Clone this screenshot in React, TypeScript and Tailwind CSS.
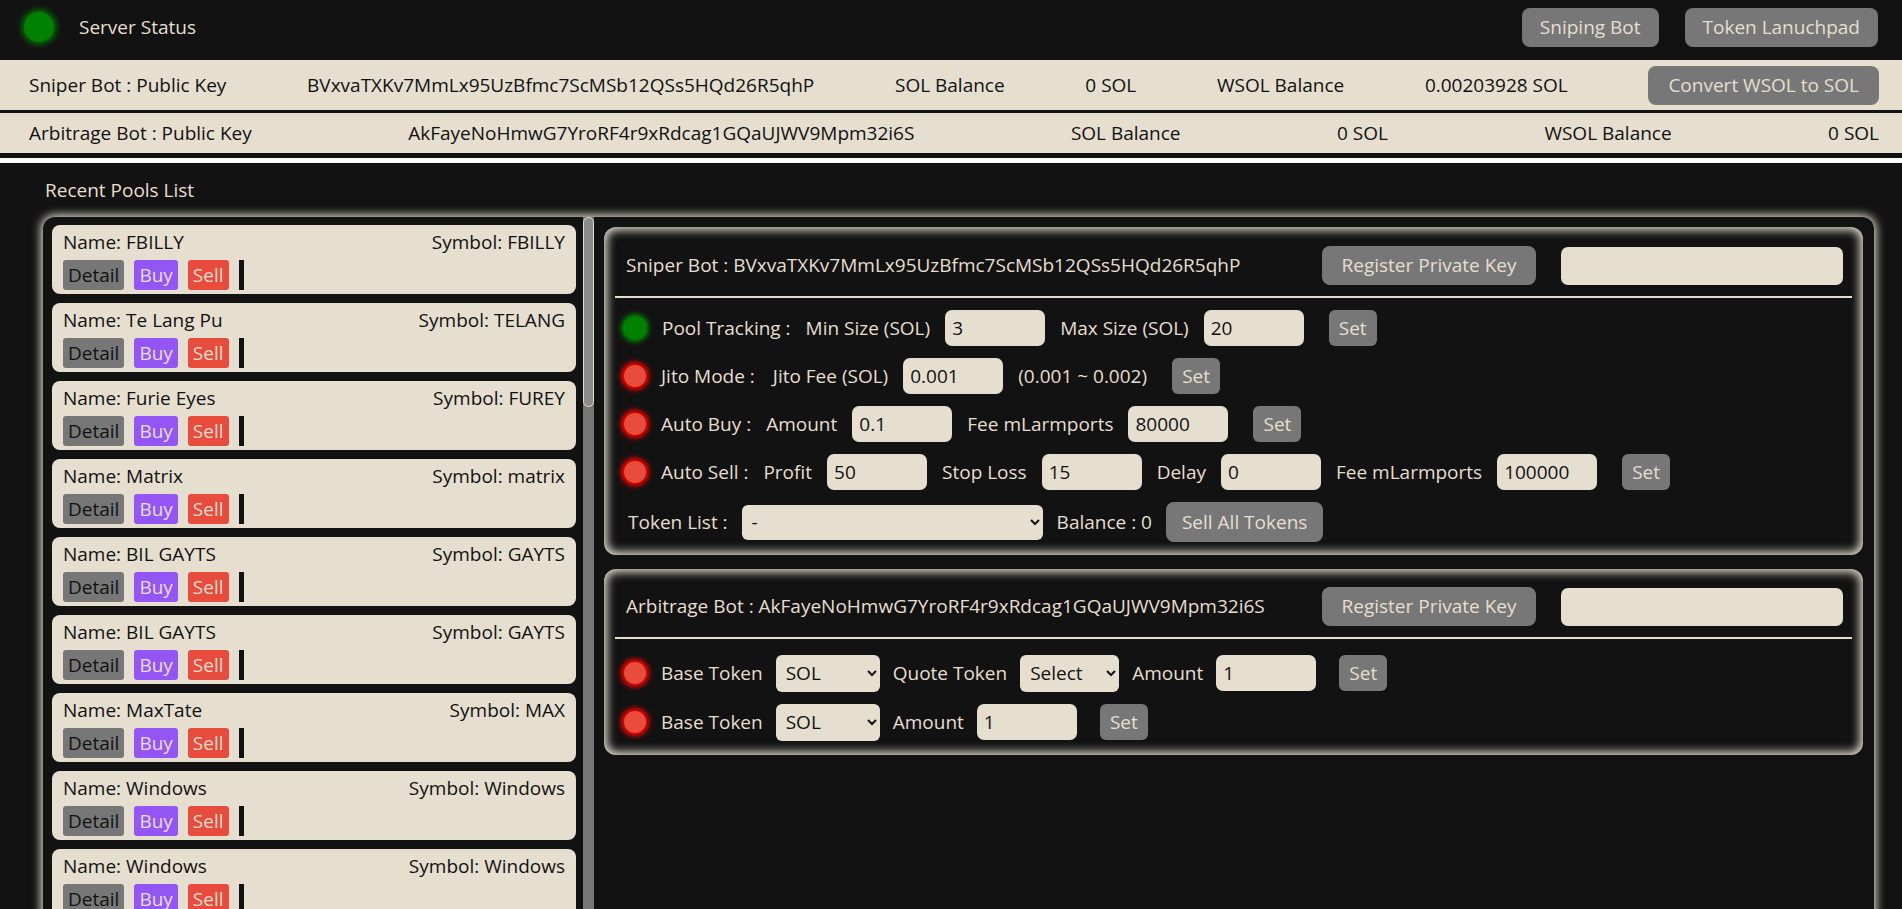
import React from "react";

type Pool = { name: string; symbol: string };

const seed: Pool[] = [
  { name: "FBILLY", symbol: "FBILLY" },
  { name: "Te Lang Pu", symbol: "TELANG" },
  { name: "Furie Eyes", symbol: "FUREY" },
  { name: "Matrix", symbol: "matrix" },
  { name: "BIL GAYTS", symbol: "GAYTS" },
  { name: "BIL GAYTS", symbol: "GAYTS" },
  { name: "MaxTate", symbol: "MAX" },
  { name: "Windows", symbol: "Windows" },
  { name: "Windows", symbol: "Windows" },
];

const pools: Pool[] = [...seed, ...seed.slice(0, 3)];

function Dot({ on }: { on?: boolean }) {
  return on ? (
    <div className="w-[24px] h-[24px] shrink-0 rounded-full bg-[#008000] shadow-[0_0_5px_2px_#008000]" />
  ) : (
    <div className="w-[22px] h-[22px] shrink-0 rounded-full bg-[#e74c3c] shadow-[0_0_5px_3px_#ff0000]" />
  );
}

function Field({ value, w = "w-[100px]" }: { value: string; w?: string }) {
  return (
    <input
      defaultValue={value}
      className={`${w} h-[36px] rounded-[7px] bg-[#e6dfd0] text-[#111] pl-[7px] outline-none`}
    />
  );
}

function SetButton() {
  return (
    <button className="ml-[10px] w-[48px] h-[36px] rounded-[6px] bg-[#777] text-[#e6dfd0]">
      Set
    </button>
  );
}

function PoolCard({ pool }: { pool: Pool }) {
  return (
    <div className="h-[69px] shrink-0 rounded-[8px] bg-[#e6dfd0] px-[11px] pt-[3px] text-[#111]">
      <div className="flex justify-between leading-[28px]">
        <span>Name: {pool.name}</span>
        <span>Symbol: {pool.symbol}</span>
      </div>
      <div className="flex items-center gap-[10px] mt-[4px] leading-[30px]">
        <button className="h-[30px] px-[5px] rounded-[3px] bg-[#777] text-[#111]">Detail</button>
        <button className="h-[30px] px-[5px] rounded-[3px] bg-[#9455f5] text-[#e6dfd0]">Buy</button>
        <button className="h-[30px] px-[5px] rounded-[3px] bg-[#e74c3c] text-[#e6dfd0]">Sell</button>
        <div className="w-[5px] h-[30px] bg-[#121212]" />
      </div>
    </div>
  );
}

function PanelHeader({ title }: { title: string }) {
  return (
    <div className="flex items-center justify-between pl-[11px] pr-[9px]">
      <span>{title}</span>
      <div className="flex items-center gap-[25px]">
        <button className="w-[214px] h-[39px] rounded-[8px] bg-[#777] text-[#e6dfd0]">
          Register Private Key
        </button>
        <input className="w-[282px] h-[38px] rounded-[7px] bg-[#e6dfd0] outline-none" />
      </div>
    </div>
  );
}

export default function App() {
  return (
    <div className="h-screen overflow-hidden bg-[#121212] text-[#e6dfd0] font-['Open_Sans','Noto_Sans',sans-serif] text-[19px] leading-[27px]">
      {/* top bar */}
      <div className="flex items-center justify-between h-[54px] pl-[24px] pr-[24px] mb-[6px]">
        <div className="flex items-center gap-[25px]">
          <div className="w-[30px] h-[30px] rounded-full bg-[#008000] shadow-[0_0_6px_2px_#008000]" />
          <span>Server Status</span>
        </div>
        <div className="flex gap-[26px]">
          <button className="h-[39px] px-[18px] rounded-[8px] bg-[#777] text-[#e6dfd0]">Sniping Bot</button>
          <button className="h-[39px] px-[18px] rounded-[8px] bg-[#777] text-[#e6dfd0]">Token Lanuchpad</button>
        </div>
      </div>

      {/* wallets */}
      <div className="flex items-center justify-between h-[50px] bg-[#e6dfd0] text-[#111] pl-[29px] pr-[23px]">
        <span>Sniper Bot : Public Key</span>
        <span>BVxvaTXKv7MmLx95UzBfmc7ScMSb12QSs5HQd26R5qhP</span>
        <span>SOL Balance</span>
        <span>0 SOL</span>
        <span>WSOL Balance</span>
        <span>0.00203928 SOL</span>
        <button className="h-[39px] px-[20px] rounded-[8px] bg-[#777] text-[#e6dfd0]">Convert WSOL to SOL</button>
      </div>
      <div className="flex items-center justify-between h-[40px] mt-[3px] bg-[#e6dfd0] text-[#111] pl-[29px] pr-[23px]">
        <span>Arbitrage Bot : Public Key</span>
        <span>AkFayeNoHmwG7YroRF4r9xRdcag1GQaUJWV9Mpm32i6S</span>
        <span>SOL Balance</span>
        <span>0 SOL</span>
        <span>WSOL Balance</span>
        <span>0 SOL</span>
      </div>
      <div className="h-[5px] mt-[5px] bg-white" />

      <div className="pl-[45px] pt-[14px] pb-[13px]">Recent Pools List</div>

      <div className="flex gap-[10px] ml-[43px] mr-[28px] h-[760px] rounded-[12px] shadow-[0_0_10px_2px_#e6dfd0] pr-[11px]">
        {/* pools list + scrollbar */}
        <div className="flex w-[551px] shrink-0 h-full">
          <div className="flex-1 overflow-hidden pl-[9px] pr-[7px] pt-[8px] flex flex-col gap-[9px]">
            {pools.map((p, i) => (
              <PoolCard key={i} pool={p} />
            ))}
          </div>
          <div className="w-[11px] h-full bg-[#777]">
            <div className="h-[190px] rounded-full border border-[#e6dfd0] bg-[#8a8a8a]" />
          </div>
        </div>

        {/* bots */}
        <div className="flex-1 pt-[10px] flex flex-col gap-[14px]">
          <div className="rounded-[12px] shadow-[inset_0_0_10px_3px_#e6dfd0] px-[11px] pt-[19px] pb-[13px]">
            <PanelHeader title="Sniper Bot : BVxvaTXKv7MmLx95UzBfmc7ScMSb12QSs5HQd26R5qhP" />
            <div className="h-[2px] bg-[#e6dfd0] mt-[11px] mb-[12px]" />
            <div className="flex flex-col gap-[12px]">
              <div className="flex items-center gap-[15px] pl-[8px] h-[36px]">
                <Dot on />
                <span>Pool Tracking :</span>
                <span>Min Size (SOL)</span>
                <Field value="3" />
                <span>Max Size (SOL)</span>
                <Field value="20" />
                <SetButton />
              </div>
              <div className="flex items-center gap-[15px] pl-[9px] h-[36px]">
                <Dot />
                <span>Jito Mode :</span>
                <span className="ml-[3px]">Jito Fee (SOL)</span>
                <Field value="0.001" />
                <span>(0.001 ~ 0.002)</span>
                <SetButton />
              </div>
              <div className="flex items-center gap-[15px] pl-[9px] h-[36px]">
                <Dot />
                <span>Auto Buy :</span>
                <span>Amount</span>
                <Field value="0.1" />
                <span>Fee mLarmports</span>
                <Field value="80000" />
                <SetButton />
              </div>
              <div className="flex items-center gap-[15px] pl-[9px] h-[36px]">
                <Dot />
                <span>Auto Sell :</span>
                <span>Profit</span>
                <Field value="50" />
                <span>Stop Loss</span>
                <Field value="15" />
                <span>Delay</span>
                <Field value="0" />
                <span>Fee mLarmports</span>
                <Field value="100000" />
                <SetButton />
              </div>
              <div className="flex items-center gap-[14px] pl-[13px] h-[40px]">
                <span>Token List :</span>
                <select className="w-[301px] h-[35px] rounded-[6px] bg-[#e6dfd0] text-[#111] pl-[6px] outline-none">
                  <option>-</option>
                </select>
                <span>Balance : 0</span>
                <button className="h-[40px] px-[16px] rounded-[8px] bg-[#777] text-[#e6dfd0]">Sell All Tokens</button>
              </div>
            </div>
          </div>

          <div className="rounded-[12px] shadow-[inset_0_0_10px_3px_#e6dfd0] px-[11px] pt-[18px] pb-[15px]">
            <PanelHeader title="Arbitrage Bot : AkFayeNoHmwG7YroRF4r9xRdcag1GQaUJWV9Mpm32i6S" />
            <div className="h-[2px] bg-[#e6dfd0] mt-[11px] mb-[16px]" />
            <div className="flex flex-col gap-[13px]">
              <div className="flex items-center gap-[13px] pl-[9px] h-[36px]">
                <Dot />
                <span className="ml-[2px]">Base Token</span>
                <select className="w-[104px] h-[37px] rounded-[6px] bg-[#e6dfd0] text-[#111] pl-[6px] outline-none">
                  <option>SOL</option>
                </select>
                <span>Quote Token</span>
                <select className="w-[99px] h-[37px] rounded-[6px] bg-[#e6dfd0] text-[#111] pl-[6px] outline-none">
                  <option>Select</option>
                </select>
                <span>Amount</span>
                <Field value="1" />
                <SetButton />
              </div>
              <div className="flex items-center gap-[13px] pl-[9px] h-[36px]">
                <Dot />
                <span className="ml-[2px]">Base Token</span>
                <select className="w-[104px] h-[37px] rounded-[6px] bg-[#e6dfd0] text-[#111] pl-[6px] outline-none">
                  <option>SOL</option>
                </select>
                <span>Amount</span>
                <Field value="1" />
                <SetButton />
              </div>
            </div>
          </div>
        </div>
      </div>
    </div>
  );
}
